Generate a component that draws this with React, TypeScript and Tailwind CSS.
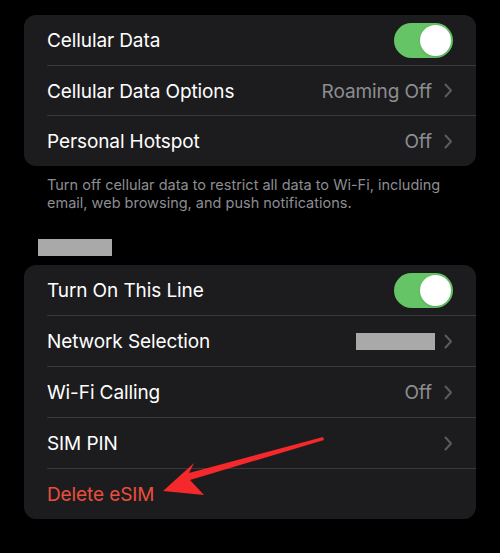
import React from 'react';

const FONT = { fontFamily: 'Inter, "Noto Sans", sans-serif' };

function Toggle() {
  return (
    <div className="w-[59px] h-[35px] rounded-full bg-[#65c466] flex items-center justify-end pr-[2px]">
      <div className="w-[31px] h-[31px] rounded-full bg-white shadow" />
    </div>
  );
}

function Chevron() {
  return (
    <svg width="9" height="15" viewBox="0 0 9 15" className="ml-[12px]">
      <path d="M1.5 1.5 L7 7.5 L1.5 13.5" stroke="#5b5b5f" strokeWidth="2" fill="none" strokeLinecap="round" strokeLinejoin="round" />
    </svg>
  );
}

type RowProps = {
  label: string;
  right?: React.ReactNode;
  chevron?: boolean;
  danger?: boolean;
  h: string;
  last?: boolean;
};

function Row({ label, right, chevron, danger, h, last }: RowProps) {
  return (
    <div className={`pl-[23px] ${h}`}>
      <div className={`flex items-center h-full pr-[23px] ${last ? '' : 'border-b border-[#38383a]'}`}>
        <span className={`flex-1 pt-[3px] text-[19px] tracking-[-0.1px] ${danger ? 'text-[#eb4e3d]' : 'text-white'}`}>{label}</span>
        {right}
        {chevron && <Chevron />}
      </div>
    </div>
  );
}

const Value = ({ children }: { children: React.ReactNode }) => (
  <span className="pt-[3px] text-[19px] tracking-[-0.1px] text-[#8d8d92]">{children}</span>
);

export default function App() {
  return (
    <div className="w-[500px] h-[553px] bg-black relative overflow-hidden" style={FONT}>
      <div className="pt-[15px] px-[24px]">
        <div className="bg-[#1c1c1e] rounded-[12px] overflow-hidden">
          <Row label="Cellular Data" right={<Toggle />} h="h-[51px]" />
          <Row label="Cellular Data Options" right={<Value>Roaming Off</Value>} chevron h="h-[50px]" />
          <Row label="Personal Hotspot" right={<Value>Off</Value>} chevron h="h-[50px]" last />
        </div>
        <p className="pl-[23px] pr-[10px] pt-[10px] text-[14.5px] leading-[18px] text-[#8d8d92]">
          Turn off cellular data to restrict all data to Wi-Fi, including email, web browsing, and push notifications.
        </p>
        <div className="ml-[14px] mt-[27px] w-[74px] h-[17px] bg-[#a9a9a9]" />
        <div className="mt-[9px] bg-[#1c1c1e] rounded-[12px] overflow-hidden">
          <Row label="Turn On This Line" right={<Toggle />} h="h-[51px]" />
          <Row label="Network Selection" right={<div className="w-[79px] h-[17px] bg-[#a9a9a9] -mr-[3px]" />} chevron h="h-[51px]" />
          <Row label="Wi-Fi Calling" right={<Value>Off</Value>} chevron h="h-[51px]" />
          <Row label="SIM PIN" chevron h="h-[51px]" />
          <Row label="Delete eSIM" danger h="h-[50px]" last />
        </div>
      </div>
      <svg className="absolute left-0 top-0 pointer-events-none" width="500" height="553" viewBox="0 0 500 553">
        <path d="M323 437 L324 440 L190 480 L204 495 L163 491 L194 463 L189 473 Z" fill="#f5282b" />
      </svg>
    </div>
  );
}
